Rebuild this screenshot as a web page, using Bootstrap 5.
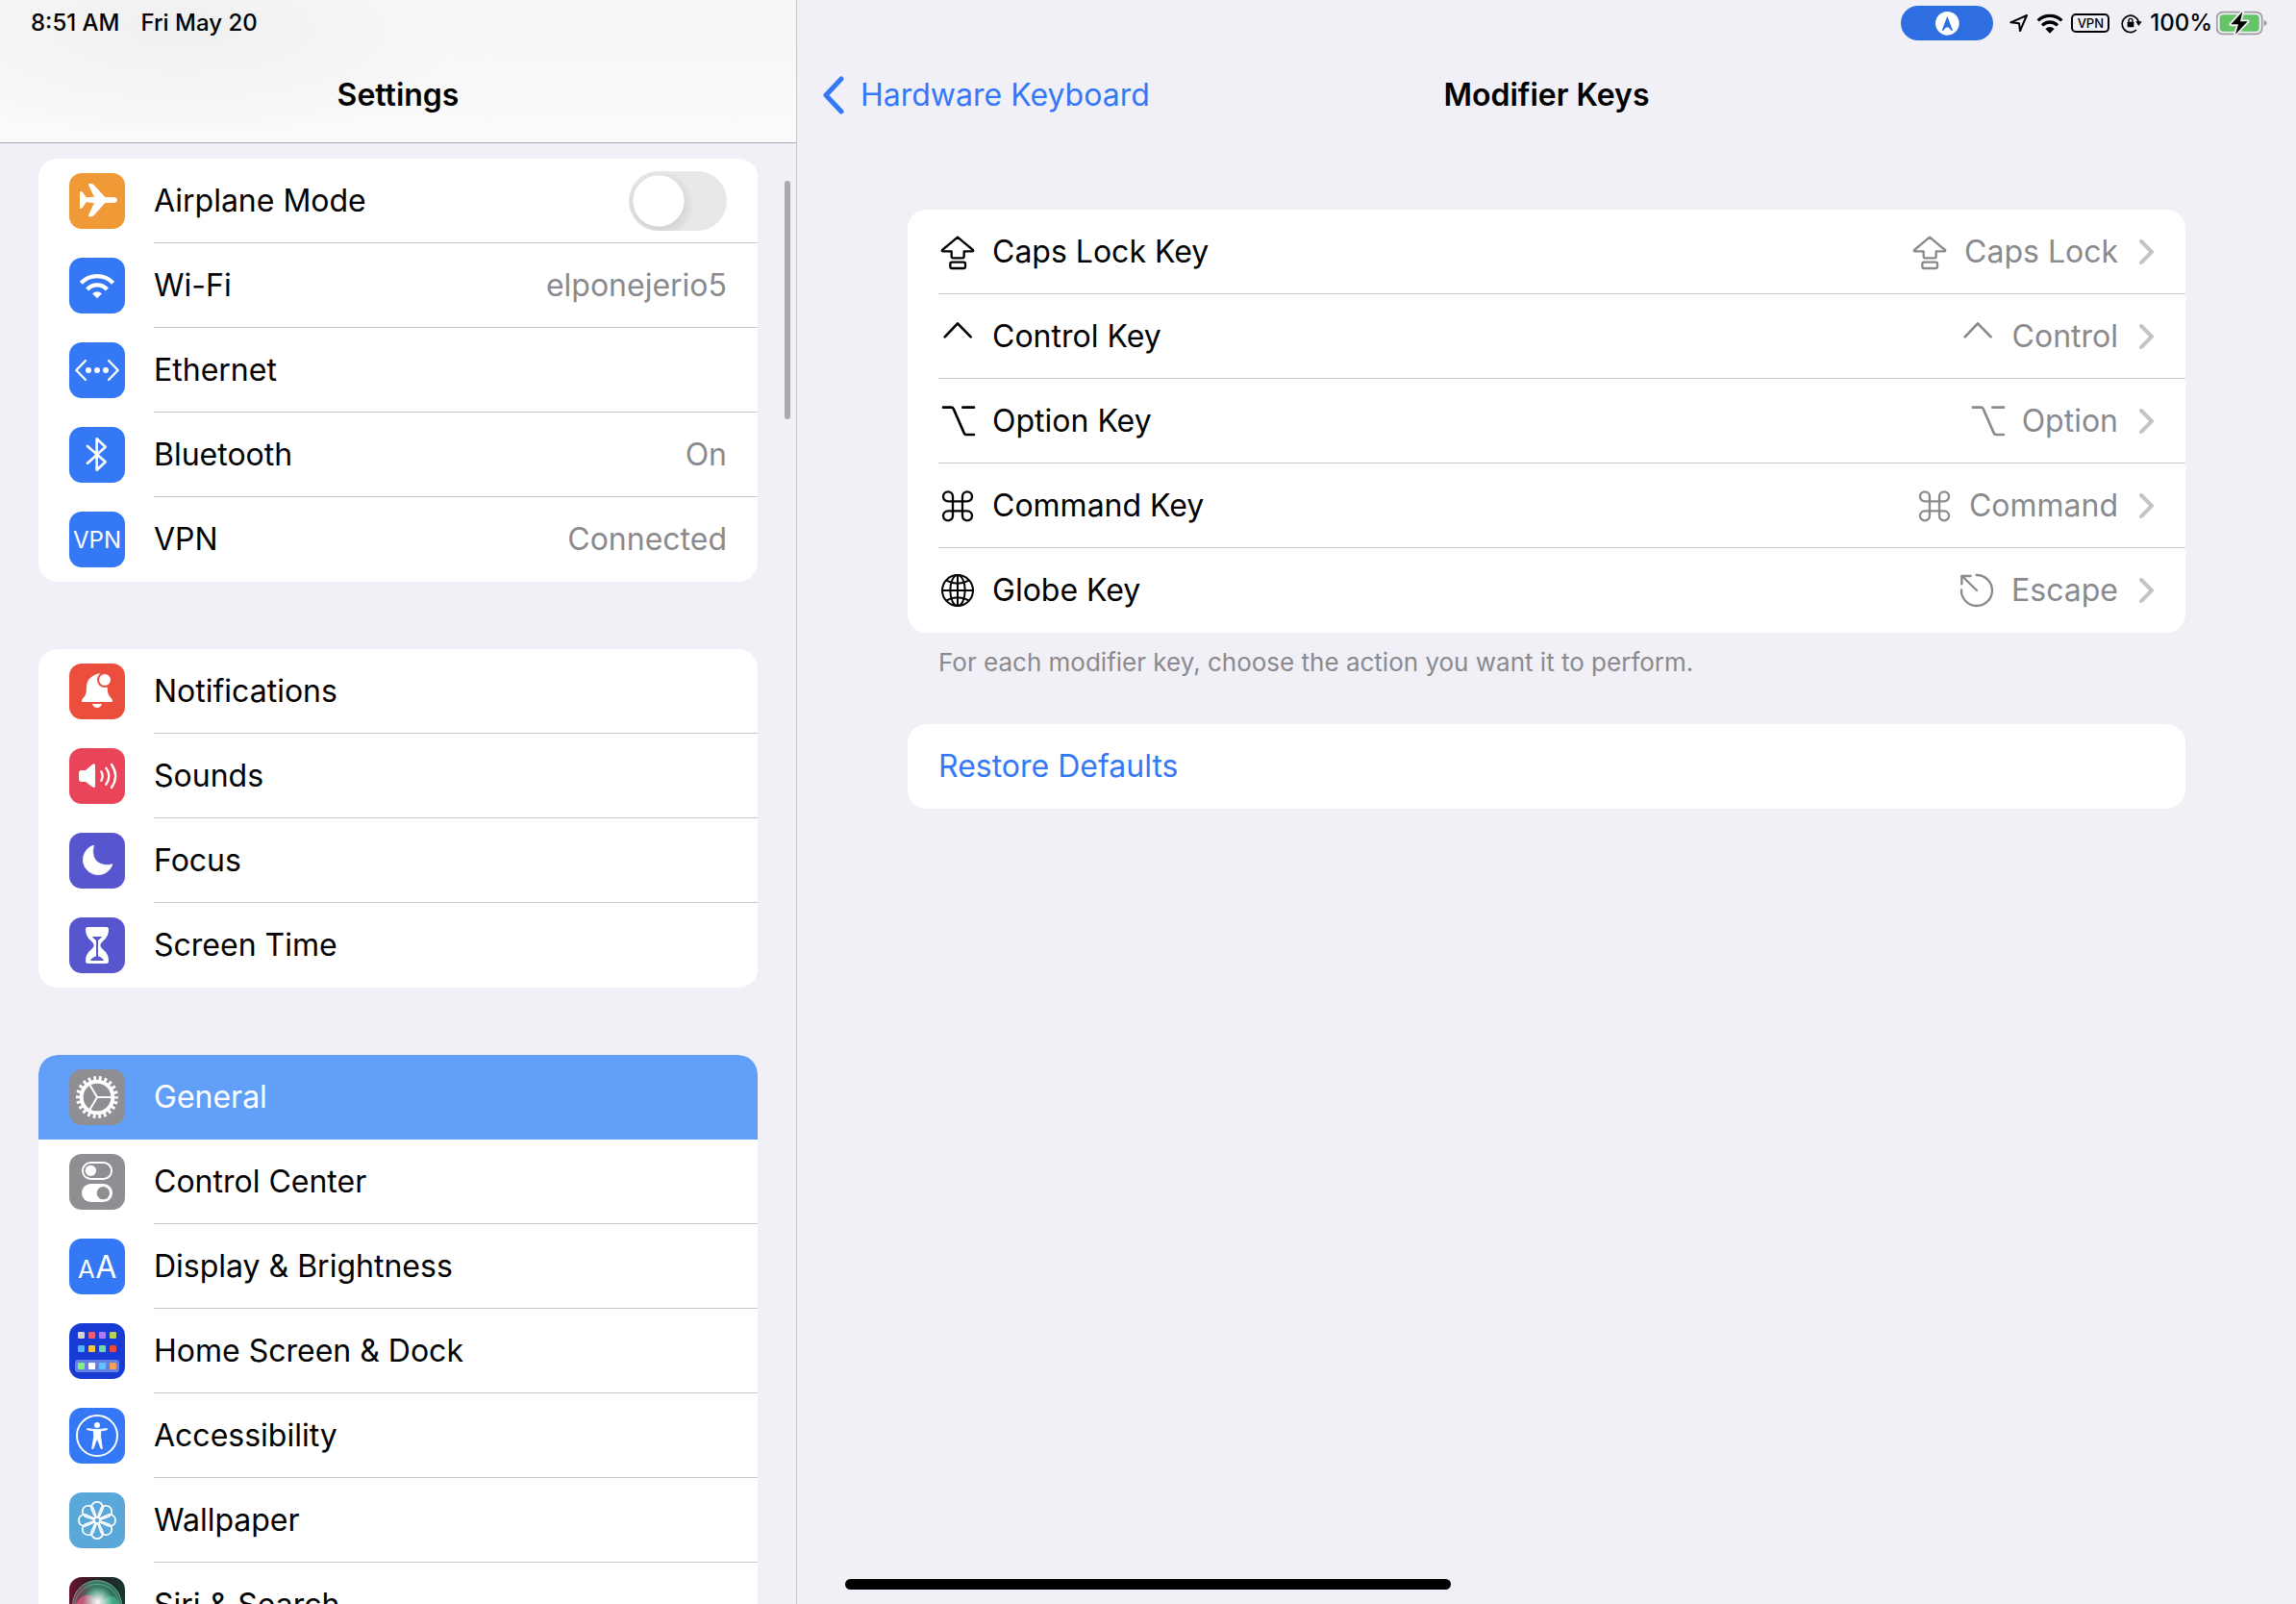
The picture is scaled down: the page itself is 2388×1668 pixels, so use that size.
<!DOCTYPE html>
<html lang="en">
<head>
<meta charset="utf-8">
<meta name="viewport" content="width=device-width, initial-scale=1">
<title>Settings – Modifier Keys</title>
<link href="https://cdn.jsdelivr.net/npm/bootstrap@5.3.0/dist/css/bootstrap.min.css" rel="stylesheet">
<style>
  :root { --ios-blue:#3478f6; --ios-bg:#f1f0f6; --ios-line:#c6c6c8; --ios-gray:#8a8a8e; }
  body { font-family:Inter,"Liberation Sans",sans-serif; font-size:32px; line-height:40px; color:#000; background:var(--ios-bg); }
  svg { display:block; flex:none; }
  .side-pane { flex:0 0 829px; border-right:1px solid var(--ios-line); }
  .side-head { background:radial-gradient(ellipse 320px 110px at 190px 30px,#f0f0f0,#f8f8f8 90%,transparent),linear-gradient(#f6f6f6,#fbfbfb); border-bottom:1px solid #a9a9ad; }
  .status { height:48px; padding:0 30px 0 32px; font-size:24px; line-height:30px; font-weight:500; }
  .clock { gap:22px; }
  .title-row { height:100px; padding-top:2px; }
  .pane-title { font-size:32px; line-height:40px; font-weight:600; margin:0; }
  .side-scroll { padding:16px 40px 0; gap:70px; }
  .ios-group { --bs-list-group-border-width:0; --bs-list-group-border-radius:20px; flex:none; overflow:hidden; border-radius:20px; background:#fff; }
  .ios-row { display:flex; align-items:stretch; height:88px; padding:0 0 0 32px; border:0; color:#000; background:#fff; text-decoration:none; }
  .ios-row .tile { width:58px; height:58px; margin:15px 30px 0 0; border-radius:13px; }
  .row-body { flex:1 1 auto; display:flex; align-items:center; justify-content:space-between; padding-right:32px; border-bottom:1px solid var(--ios-line); }
  .ios-row:last-child .row-body, .ios-row.chosen .row-body { border-bottom-color:transparent; }
  .ios-row.chosen { background:#629ff8; color:#fff; }
  .row-value { color:var(--ios-gray); }
  .form-check-input.ios-switch { width:102px; height:62px; margin:0; border:0; border-radius:31px; background-color:#e8e8e9; background-image:radial-gradient(circle closest-side,#fff 26px,#fff 97%,transparent),radial-gradient(circle closest-side,#d2d2d4 60%,transparent); background-size:54px 54px,72px 72px; background-repeat:no-repeat; background-position:4px 4px,-4px -1px; cursor:pointer; }
  .form-check-input.ios-switch:checked { background-color:#65c466; background-position:44px 4px,36px -1px; }
  .scroll-thumb { position:absolute; right:6px; top:188px; width:6px; height:248px; border-radius:3px; background:#aaaaae; }
  .main-head { display:grid; grid-template-columns:1fr auto 1fr; align-items:center; padding-left:26px; padding-right:26px; }
  .back-link { color:var(--ios-blue); text-decoration:none; gap:16px; }
  .main-body { padding:70px 115px 0; }
  .note-text { margin:0; padding:16px 32px 49px; font-size:26px; line-height:30px; color:var(--ios-gray); }
  .restore-btn { color:var(--ios-blue); align-items:center; width:100%; text-align:left; }
  .key-name, .key-value { gap:16px; }
  .key-value { color:var(--ios-gray); }
  .key-next { gap:22px; }
  .rec-pill { width:96px; height:36px; border-radius:18px; background:#2f6ee0; margin-right:17px; }
  .home-bar { position:fixed; left:50%; bottom:15px; width:630px; height:11px; margin-left:-315px; border-radius:6px; background:#000; }
</style>
<script src="https://cdn.jsdelivr.net/npm/bootstrap@5.3.0/dist/js/bootstrap.bundle.min.js" defer></script>
</head>
<body class="overflow-hidden">

<svg width="0" height="0" class="position-absolute" aria-hidden="true">
  <symbol id="k-caps" viewBox="0 0 120 120"><g fill="none" stroke="currentColor" stroke-width="7" stroke-linejoin="round"><path d="M60 14 L108 54 Q110 58 105 58 H80 V73 Q80 79 75 79 H46 Q41 79 41 73 V58 H15 Q10 58 12 54 Z"/><rect x="37" y="92" width="47" height="19" rx="5"/></g></symbol>
  <symbol id="k-ctrl" viewBox="0 0 120 120"><path d="M20 61 L60 19 L101 61" fill="none" stroke="currentColor" stroke-width="8" stroke-linecap="round" stroke-linejoin="round"/></symbol>
  <symbol id="k-opt" viewBox="0 0 120 120"><path d="M15 17 H40 Q45 17 47 21 L80 97 Q82 102 87 102 H111 M76 17 H111" fill="none" stroke="currentColor" stroke-width="8" stroke-linecap="round" stroke-linejoin="round"/></symbol>
  <symbol id="k-cmd" viewBox="0 0 120 120"><path d="M45 46 H30 A15 15 0 1 1 45 31 V91 A15 15 0 1 1 30 76 H90 A15 15 0 1 1 75 91 V31 A15 15 0 1 1 90 46 Z" fill="none" stroke="currentColor" stroke-width="7"/></symbol>
  <symbol id="k-globe" viewBox="0 0 120 120"><g fill="none" stroke="currentColor" stroke-width="6"><circle cx="60" cy="60" r="48"/><ellipse cx="60" cy="60" rx="23" ry="48"/><path d="M60 12 V108 M12 60 H108 M25 29 Q60 48 95 29 M25 91 Q60 72 95 91"/></g></symbol>
  <symbol id="k-esc" viewBox="0 0 120 120"><path d="M59 12 A48 48 0 1 1 12 58 M60 60 L14 15 M41 15 H13 V40" fill="none" stroke="currentColor" stroke-width="7" stroke-linecap="round" stroke-linejoin="round"/></symbol>
  <symbol id="k-next" viewBox="0 0 16 26"><path d="M2 2 L13 13 L2 24" fill="none" stroke="#c4c4c6" stroke-width="4" stroke-linecap="round" stroke-linejoin="round"/></symbol>
</svg>

<div class="d-flex vh-100">

  <aside class="side-pane position-relative d-flex flex-column overflow-hidden">
    <header class="side-head">
      <div class="status clock d-flex align-items-center">
        <span>8:51 AM</span><span>Fri May 20</span>
      </div>
      <div class="title-row d-flex align-items-center justify-content-center"><h1 class="pane-title">Settings</h1></div>
    </header>

    <nav class="side-scroll d-flex flex-column flex-fill overflow-hidden" aria-label="Settings">
      <div class="list-group ios-group">
        <div class="list-group-item ios-row">
          <svg class="tile" viewBox="0 0 174 174"><rect width="174" height="174" fill="#f09a37"/><path fill="#fff" d="M150 84 C150 90 144 93 137 93 H112 L77 132 Q74 136 69 136 H63 Q59 136 60 132 L78 93 L53 91 L42 107 Q39 111 36 111 Q33 111 33 107 V61 Q33 57 36 57 Q40 57 43 61 L53 76 L78 74 L60 37 Q59 33 63 33 H69 Q74 33 77 37 L112 75 H137 C144 75 150 78 150 84 Z"/></svg>
          <div class="row-body"><label for="airplane">Airplane Mode</label>
            <input class="form-check-input ios-switch" type="checkbox" role="switch" id="airplane"></div>
        </div>
        <a href="#" class="list-group-item ios-row">
          <svg class="tile" viewBox="0 0 174 174"><rect width="174" height="174" fill="#3478f6"/><g fill="none" stroke="#fff" stroke-width="13"><path d="M37 79 A69 69 0 0 1 137 79"/><path d="M56 99 A42 42 0 0 1 118 99"/></g><path fill="#fff" d="M87 127 L72 112 Q87 99 102 112 Z"/></svg>
          <div class="row-body"><span>Wi-Fi</span><span class="row-value">elponejerio5</span></div>
        </a>
        <a href="#" class="list-group-item ios-row">
          <svg class="tile" viewBox="0 0 174 174"><rect width="174" height="174" fill="#3478f6"/><path d="M51 57 L22 87 L51 117 M123 57 L152 87 L123 117" fill="none" stroke="#fff" stroke-width="7" stroke-linecap="round" stroke-linejoin="round"/><g fill="#fff"><circle cx="60" cy="87" r="9"/><circle cx="87" cy="87" r="9"/><circle cx="114" cy="87" r="9"/></g></svg>
          <div class="row-body"><span>Ethernet</span></div>
        </a>
        <a href="#" class="list-group-item ios-row">
          <svg class="tile" viewBox="0 0 174 174"><rect width="174" height="174" fill="#3478f6"/><path d="M57 60 L113 109 L86 134 V37 L113 62 L57 113" fill="none" stroke="#fff" stroke-width="8" stroke-linecap="round" stroke-linejoin="round"/></svg>
          <div class="row-body"><span>Bluetooth</span><span class="row-value">On</span></div>
        </a>
        <a href="#" class="list-group-item ios-row">
          <svg class="tile" viewBox="0 0 174 174"><rect width="174" height="174" fill="#3478f6"/><text x="87" y="113" text-anchor="middle" font-size="72" fill="#fff">VPN</text></svg>
          <div class="row-body"><span>VPN</span><span class="row-value">Connected</span></div>
        </a>
      </div>

      <div class="list-group ios-group">
        <a href="#" class="list-group-item ios-row">
          <svg class="tile" viewBox="0 0 174 174"><rect width="174" height="174" fill="#eb4e3d"/><path fill="#fff" d="M87 32 C62 42 55 54 54 74 C53 94 51 100 43 108 Q36 116 41 120 H133 Q138 116 131 108 C123 100 120 94 119 76 L117 50 C112 34 98 30 87 32 Z M72 126 H102 Q98 138 87 138 Q76 138 72 126 Z"/><circle cx="111" cy="51" r="21" fill="#fff" stroke="#eb4e3d" stroke-width="6"/></svg>
          <div class="row-body"><span>Notifications</span></div>
        </a>
        <a href="#" class="list-group-item ios-row">
          <svg class="tile" viewBox="0 0 174 174"><rect width="174" height="174" fill="#ea445a"/><path fill="#fff" d="M30 78 Q30 69 38 69 H51 L71 52 Q81 45 81 55 V118 Q81 127 72 121 L51 105 H38 Q30 105 30 96 Z"/><path d="M100 73 Q108 87 100 101 M115 62 Q133 87 115 113 M132 51 Q157 87 132 123" fill="none" stroke="#fff" stroke-width="7" stroke-linecap="round"/></svg>
          <div class="row-body"><span>Sounds</span></div>
        </a>
        <a href="#" class="list-group-item ios-row">
          <svg class="tile" viewBox="0 0 174 174"><rect width="174" height="174" fill="#5856cf"/><path fill="#fff" d="M77 39 A47 47 0 1 0 135 98 C98 108 64 86 77 39 Z" stroke="#fff" stroke-width="2" stroke-linejoin="round"/></svg>
          <div class="row-body"><span>Focus</span></div>
        </a>
        <a href="#" class="list-group-item ios-row">
          <svg class="tile" viewBox="0 0 174 174"><rect width="174" height="174" fill="#5856cf"/><path fill="#fff" d="M58 30 H116 Q123 30 123 38 Q123 60 105 74 Q97 81 97 87 Q97 93 105 100 Q123 114 123 136 Q123 144 116 144 H58 Q51 144 51 136 Q51 114 69 100 Q77 93 77 87 Q77 81 69 74 Q51 60 51 38 Q51 30 58 30 Z"/><path fill="#5856cf" d="M71 60 H103 Q97 66 90 72 V121 Q106 127 108 135 H66 Q68 127 84 121 V72 Q77 66 71 60 Z"/></svg>
          <div class="row-body"><span>Screen Time</span></div>
        </a>
      </div>

      <div class="list-group ios-group">
        <a href="#" class="list-group-item ios-row chosen" aria-current="page">
          <svg class="tile" viewBox="0 0 174 174"><rect width="174" height="174" fill="#8e8e93"/><g fill="none" stroke="#fff"><circle cx="87" cy="87" r="59" stroke-width="14" pathLength="220" stroke-dasharray="5 5" stroke-dashoffset="2.5"/><circle cx="87" cy="87" r="49" stroke-width="12"/><path d="M87 87 H132 M87 87 L64 48 M87 87 L64 126" stroke-width="6"/></g></svg>
          <div class="row-body"><span>General</span></div>
        </a>
        <a href="#" class="list-group-item ios-row">
          <svg class="tile" viewBox="0 0 174 174"><rect width="174" height="174" fill="#8e8e93"/><rect x="42" y="27" width="90" height="51" rx="25" fill="none" stroke="#fff" stroke-width="6"/><circle cx="67" cy="52" r="17" fill="#fff"/><rect x="39" y="93" width="96" height="57" rx="28" fill="#fff"/><circle cx="106" cy="122" r="20" fill="#8e8e93"/></svg>
          <div class="row-body"><span>Control Center</span></div>
        </a>
        <a href="#" class="list-group-item ios-row">
          <svg class="tile" viewBox="0 0 174 174"><rect width="174" height="174" fill="#3478f6"/><text fill="#fff" y="123"><tspan x="27" font-size="77">A</tspan><tspan x="82" font-size="96">A</tspan></text></svg>
          <div class="row-body"><span>Display &amp; Brightness</span></div>
        </a>
        <a href="#" class="list-group-item ios-row">
          <svg class="tile" viewBox="0 0 174 174"><rect width="174" height="174" fill="#173bd4"/><rect x="18" y="114" width="138" height="39" rx="10" fill="#6580e4"/>
            <rect x="27" y="27" width="21" height="21" rx="4" fill="#d8d6cc"/><rect x="60" y="27" width="21" height="21" rx="4" fill="#ee5d6a"/><rect x="93" y="27" width="21" height="21" rx="4" fill="#b079f5"/><rect x="126" y="27" width="21" height="21" rx="4" fill="#b9d157"/>
            <rect x="27" y="69" width="21" height="21" rx="4" fill="#56b6f5"/><rect x="60" y="69" width="21" height="21" rx="4" fill="#fbc540"/><rect x="93" y="69" width="21" height="21" rx="4" fill="#6fd8a9"/><rect x="126" y="69" width="21" height="21" rx="4" fill="#ea4a36"/>
            <rect x="27" y="123" width="21" height="21" rx="4" fill="#84f07e"/><rect x="60" y="123" width="21" height="21" rx="4" fill="#fff"/><rect x="93" y="123" width="21" height="21" rx="4" fill="#5bc8fa"/><rect x="126" y="123" width="21" height="21" rx="4" fill="#f4a058"/></svg>
          <div class="row-body"><span>Home Screen &amp; Dock</span></div>
        </a>
        <a href="#" class="list-group-item ios-row">
          <svg class="tile" viewBox="0 0 174 174"><rect width="174" height="174" fill="#3478f6"/><circle cx="87" cy="87" r="63" fill="none" stroke="#fff" stroke-width="6"/><circle cx="87" cy="54" r="9" fill="#fff"/><path fill="#fff" stroke="#fff" stroke-width="3" stroke-linejoin="round" d="M56 65 Q87 71 118 65 V68 L98 72 V92 L103 127 H99 L89 99 H85 L75 127 H71 L77 92 V72 L56 68 Z"/></svg>
          <div class="row-body"><span>Accessibility</span></div>
        </a>
        <a href="#" class="list-group-item ios-row">
          <svg class="tile" viewBox="0 0 174 174"><defs><path id="petal" d="M82 79 L71 56 A18 18 0 1 1 103 56 L92 79"/></defs><rect width="174" height="174" fill="#5aa7d9"/><g fill="none" stroke="#fff" stroke-width="5" stroke-linejoin="round"><circle cx="87" cy="87" r="9"/><use href="#petal"/><use href="#petal" transform="rotate(45 87 87)"/><use href="#petal" transform="rotate(90 87 87)"/><use href="#petal" transform="rotate(135 87 87)"/><use href="#petal" transform="rotate(180 87 87)"/><use href="#petal" transform="rotate(225 87 87)"/><use href="#petal" transform="rotate(270 87 87)"/><use href="#petal" transform="rotate(315 87 87)"/></g></svg>
          <div class="row-body"><span>Wallpaper</span></div>
        </a>
        <a href="#" class="list-group-item ios-row">
          <svg class="tile" viewBox="0 0 174 174"><defs><linearGradient id="siri-bg"><stop offset="0" stop-color="#6b1230"/><stop offset=".45" stop-color="#2a1c24"/><stop offset="1" stop-color="#17362f"/></linearGradient><linearGradient id="siri-orb"><stop offset="0" stop-color="#8d2a4c"/><stop offset=".4" stop-color="#3b7a66"/><stop offset="1" stop-color="#2d6f58"/></linearGradient><radialGradient id="siri-glow"><stop offset="0" stop-color="#fff"/><stop offset=".4" stop-color="#d8e8e4" stop-opacity=".75"/><stop offset="1" stop-color="#9fd" stop-opacity="0"/></radialGradient></defs><rect width="174" height="174" fill="url(#siri-bg)"/><circle cx="87" cy="87" r="76" fill="url(#siri-orb)" stroke="#6fae95" stroke-width="3"/><circle cx="87" cy="92" r="70" fill="none" stroke="#7cc5a8" stroke-opacity=".6" stroke-width="3"/><path d="M16 92 Q38 44 74 60 Q92 76 96 100 H16 Z" fill="#e0597f" opacity=".8"/><path d="M96 100 Q112 50 142 62 Q156 74 160 100 Z" fill="#48b894" opacity=".7"/><circle cx="90" cy="78" r="48" fill="url(#siri-glow)"/></svg>
          <div class="row-body"><span>Siri &amp; Search</span></div>
        </a>
      </div>
    </nav>
    <div class="scroll-thumb"></div>
  </aside>

  <main class="flex-fill d-flex flex-column overflow-hidden">
    <div class="status d-flex align-items-center justify-content-end">
      <span class="rec-pill d-flex align-items-center justify-content-center"><svg width="25" height="25" viewBox="0 0 75 75"><circle cx="37" cy="37" r="37" fill="#fff"/><path d="M37 14 L54 59 Q51 61 48 58 Q43 49 37 49 Q31 49 26 58 Q23 61 20 59 Z" fill="#2f6ee0"/></svg></span>
      <svg width="20" height="20" viewBox="0 0 60 60" class="me-2"><path d="M4 28 L54 6 L33 54 L30 31 Z" fill="none" stroke="#000" stroke-width="6" stroke-linejoin="round"/></svg>
      <svg width="28" height="21" viewBox="0 0 84 63" class="me-2"><g fill="none" stroke="#000" stroke-width="10"><path d="M5 22 A53 53 0 0 1 79 22"/><path d="M18 37 A34 34 0 0 1 66 37"/></g><path d="M42 62 L28 48 Q42 36 56 48 Z"/></svg>
      <svg width="40" height="22" viewBox="0 0 120 66" class="me-2"><rect x="3" y="6" width="114" height="54" rx="12" fill="none" stroke="#000" stroke-width="6"/><text x="61" y="47" text-anchor="middle" font-size="39" font-weight="500">VPN</text></svg>
      <svg width="22" height="22" viewBox="0 0 66 66" class="ms-1 me-2"><path d="M48 54 A26 26 0 1 1 55 30" fill="none" stroke="#000" stroke-width="5"/><path d="M46 28 H65 L55 42 Z"/><rect x="20" y="29" width="20" height="17" rx="2"/><path d="M24 30 V25 Q24 19 30 19 Q36 19 36 25 V30" fill="none" stroke="#000" stroke-width="4"/></svg>
      <span class="me-1">100%</span>
      <svg width="53" height="26" viewBox="0 0 159 78"><rect x="2" y="5" width="141" height="68" rx="18" fill="none" stroke="#9b9ba0" stroke-width="5"/><rect x="11" y="13" width="123" height="52" rx="11" fill="#65c466"/><path d="M149 29 Q158 33 158 39 Q158 45 149 49 Z" fill="#9b9ba0"/><path d="M82 4 L46 43 H69 L60 74 L98 34 H75 Z" fill="#000" stroke="#f1f0f6" stroke-width="11" stroke-linejoin="round" paint-order="stroke"/></svg>
    </div>
    <header class="title-row main-head">
      <a href="#" class="back-link d-inline-flex align-items-center"><svg width="24" height="40" viewBox="0 0 24 40"><path d="M20 3 L4 20 L20 37" fill="none" stroke="#3478f6" stroke-width="5" stroke-linecap="round" stroke-linejoin="round"/></svg><span>Hardware Keyboard</span></a>
      <h2 class="pane-title">Modifier Keys</h2>
    </header>

    <section class="main-body">
      <div class="list-group ios-group">
        <a href="#" class="list-group-item ios-row"><div class="row-body"><span class="key-name d-flex align-items-center"><svg width="40" height="40"><use href="#k-caps"/></svg>Caps Lock Key</span>
          <span class="key-next d-flex align-items-center"><span class="key-value d-flex align-items-center"><svg width="40" height="40"><use href="#k-caps"/></svg>Caps Lock</span><svg width="16" height="26"><use href="#k-next"/></svg></span></div></a>
        <a href="#" class="list-group-item ios-row"><div class="row-body"><span class="key-name d-flex align-items-center"><svg width="40" height="40"><use href="#k-ctrl"/></svg>Control Key</span>
          <span class="key-next d-flex align-items-center"><span class="key-value d-flex align-items-center"><svg width="40" height="40"><use href="#k-ctrl"/></svg>Control</span><svg width="16" height="26"><use href="#k-next"/></svg></span></div></a>
        <a href="#" class="list-group-item ios-row"><div class="row-body"><span class="key-name d-flex align-items-center"><svg width="40" height="40"><use href="#k-opt"/></svg>Option Key</span>
          <span class="key-next d-flex align-items-center"><span class="key-value d-flex align-items-center"><svg width="40" height="40"><use href="#k-opt"/></svg>Option</span><svg width="16" height="26"><use href="#k-next"/></svg></span></div></a>
        <a href="#" class="list-group-item ios-row"><div class="row-body"><span class="key-name d-flex align-items-center"><svg width="40" height="40"><use href="#k-cmd"/></svg>Command Key</span>
          <span class="key-next d-flex align-items-center"><span class="key-value d-flex align-items-center"><svg width="40" height="40"><use href="#k-cmd"/></svg>Command</span><svg width="16" height="26"><use href="#k-next"/></svg></span></div></a>
        <a href="#" class="list-group-item ios-row"><div class="row-body"><span class="key-name d-flex align-items-center"><svg width="40" height="40"><use href="#k-globe"/></svg>Globe Key</span>
          <span class="key-next d-flex align-items-center"><span class="key-value d-flex align-items-center"><svg width="40" height="40"><use href="#k-esc"/></svg>Escape</span><svg width="16" height="26"><use href="#k-next"/></svg></span></div></a>
      </div>
      <p class="note-text">For each modifier key, choose the action you want it to perform.</p>
      <div class="list-group ios-group">
        <button type="button" class="list-group-item ios-row restore-btn">Restore Defaults</button>
      </div>
    </section>
  </main>
</div>
<div class="home-bar"></div>
</body>
</html>
